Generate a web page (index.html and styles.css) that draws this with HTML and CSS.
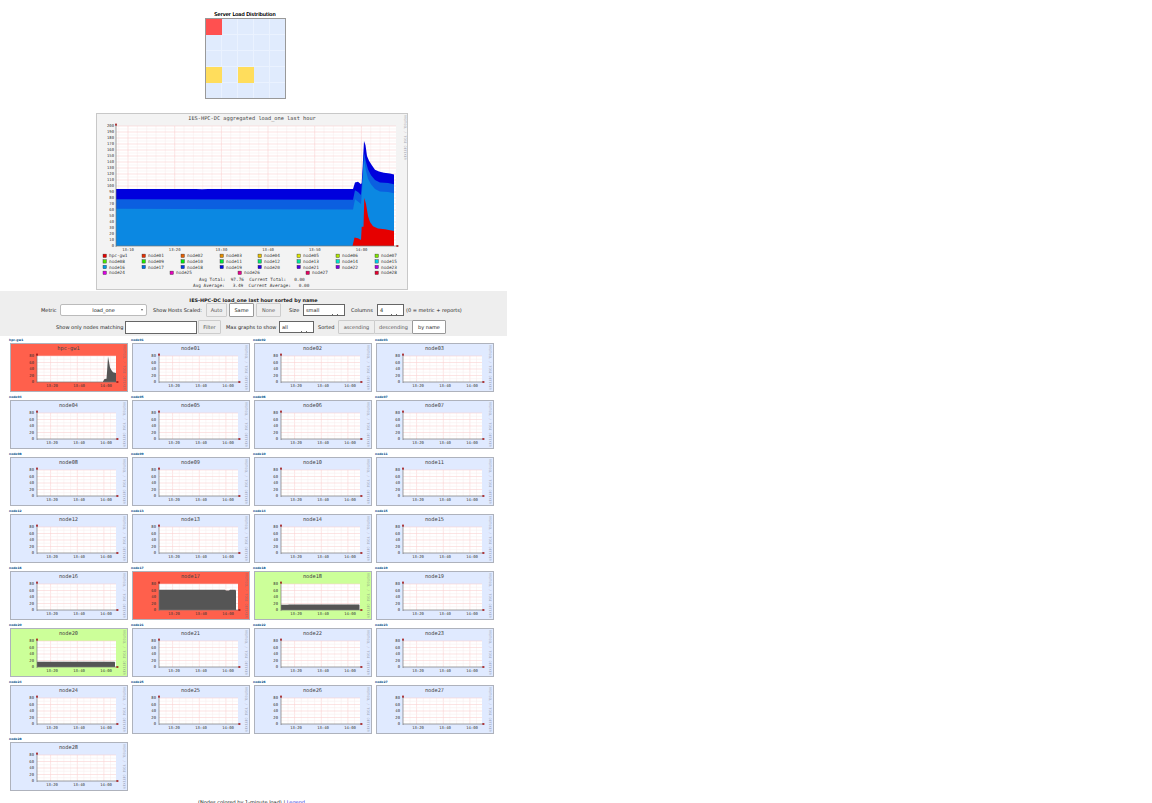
FILE: index.html
```html
<!DOCTYPE html>
<html lang="en">
<head>
    <meta charset="UTF-8">
    <title>IES-HPC-DC Cluster Report</title>
    <meta name="viewport" content="width=device-width, initial-scale=1.0">
    <link rel="stylesheet" href="styles.css">
</head>
<body>
    <div class="page">
        <div class="heat-title">Server Load Distribution</div>
        <div class="heatmap" id="heatmap"></div>

        <div class="aggregate" id="aggregate"></div>

        <form class="controls">
            <div class="controls-title">IES-HPC-DC load_one last hour sorted by name</div>
            <div class="controls-row row-top">
                <span class="lbl w-metric">Metric</span>
                <span class="sel sel-metric">load_one</span>
                <span class="lbl w-scaled">Show Hosts Scaled:</span>
                <button type="button" class="btn w-auto">Auto</button>
                <button type="button" class="btn on w-same">Same</button>
                <button type="button" class="btn w-none">None</button>
                <span class="lbl w-size">Size</span>
                <span class="sel dark w-small">small</span>
                <span class="lbl w-cols">Columns</span>
                <span class="sel dark w-four">4</span>
                <span class="lbl w-note">(0 = metric + reports)</span>
            </div>
            <div class="controls-row row-bottom">
                <span class="lbl w-match">Show only nodes matching</span>
                <input type="text" class="match">
                <button type="button" class="btn w-filter">Filter</button>
                <span class="lbl w-max">Max graphs to show</span>
                <span class="sel dark w-all">all</span>
                <span class="lbl w-sorted">Sorted</span>
                <span class="btn-group">
                    <button type="button" class="btn w-asc">ascending</button>
                    <button type="button" class="btn w-desc">descending</button>
                    <button type="button" class="btn on w-name">by name</button>
                </span>
            </div>
        </form>

        <div class="nodes" id="nodes"></div>

        <div class="foot">(Nodes colored by 1-minute load) | <a href="#">Legend</a></div>
    </div>
    <script src="app.js"></script>
</body>
</html>
```

FILE: styles.css
```css
html, body {
    margin: 0;
    padding: 0;
    background: white;
    overflow: hidden;
}
body {
    height: 803px;
    font-family: "DejaVu Sans", Verdana, sans-serif;
    color: #111;
}
.page {
    width: 507px;
    display: flex;
    flex-direction: column;
}
.heat-title {
    width: 80px;
    margin: 11px 0 0 205px;
    height: 7px;
    line-height: 7px;
    font-size: 5.05px;
    text-align: center;
    white-space: nowrap;
    color: #000;
    text-shadow: 0 0 0.3px #000;
}
.heatmap {
    margin-left: 205px;
    width: 81px;
    height: 81px;
    box-sizing: border-box;
    border: 1px solid #999;
    display: grid;
    grid-template-columns: repeat(5, 16px);
    grid-auto-rows: 16px;
    overflow: hidden;
}
.cell {
    background: #e0ebfd;
    box-shadow: inset -1px -1px 0 #eaf2ff;
}
.cell.hot { background: #ff5050; box-shadow: none; }
.cell.warm { background: #ffdd5c; box-shadow: none; }

.aggregate {
    margin: 14px 0 0 96px;
    width: 312px;
    height: 177px;
}
.aggregate svg, .node svg {
    display: block;
}
.controls {
    margin-top: 1px;
    height: 45px;
    background: #eee;
    font-size: 5px;
    box-sizing: border-box;
    padding-top: 6px;
}
.controls-title {
    text-align: center;
    font-weight: bold;
    font-size: 4.87px;
    height: 6px;
    line-height: 6px;
    color: #222;
}
.controls-row {
    display: flex;
    align-items: center;
    height: 14px;
    white-space: nowrap;
}
.row-top { padding-left: 41px; }
.row-bottom { margin-top: 3px; padding-left: 56px; }
.lbl { color: #222; display: block; }
.w-metric { width: 19px; }
.w-scaled { width: 51px; margin-left: 6px; }
.w-size { width: 14px; margin-left: 8px; }
.w-cols { width: 23px; margin-left: 6px; }
.w-note { margin-left: 2px; }
.w-match { width: 69px; }
.w-max { width: 51px; margin-left: 5px; }
.w-sorted { width: 20px; margin-left: 4px; }

.sel {
    position: relative;
    display: block;
    box-sizing: border-box;
    height: 12px;
    line-height: 10px;
    background: white;
    border: 1px solid #bbb;
    border-radius: 2px;
    text-align: center;
}
.sel::after {
    content: "";
    position: absolute;
    right: 3px;
    top: 4px;
    border: 1.5px solid transparent;
    border-top: 2px solid #666;
}
.sel.dark {
    border-color: #666;
    border-radius: 0;
    text-align: left;
    padding-left: 2px;
    color: #222;
}
.sel.dark::after {
    top: auto;
    bottom: 0;
    right: 6px;
    width: 4px;
    height: 1px;
    border: 0;
    border-left: 1px solid #666;
    border-right: 1px solid #666;
}
.sel-metric { width: 87px; }
.w-small { width: 42px; }
.w-four { width: 27px; margin-left: 3px; }
.w-all { width: 35px; margin-left: 2px; }

.btn {
    display: block;
    box-sizing: border-box;
    height: 14px;
    padding: 0;
    background: #eee;
    border: 1px solid #ccc;
    border-radius: 1px;
    font-family: inherit;
    font-size: 5px;
    color: #555;
    cursor: pointer;
}
.btn.on {
    background: white;
    border-color: #999;
    color: #222;
}
.w-auto { width: 21px; margin-left: 2px; }
.w-same { width: 25px; margin-left: 2px; }
.w-none { width: 25px; margin-left: 2px; }
.w-filter { width: 23px; margin-left: 1px; }
.btn-group { display: flex; }
.w-asc { width: 37px; }
.w-desc { width: 39px; margin-left: -1px; }
.w-name { width: 34px; margin-left: -1px; }
.match {
    width: 72px;
    height: 13px;
    box-sizing: border-box;
    border: 1px solid #666;
    background: white;
    padding: 0;
}

.nodes {
    margin: 2px 0 0 10px;
    display: grid;
    grid-template-columns: repeat(4, 118px);
    grid-auto-rows: 57px;
    column-gap: 4px;
}
.node-name {
    display: block;
    height: 5px;
    line-height: 5px;
    margin-left: -1px;
    font-size: 3px;
    font-weight: bold;
    color: #004c8c;
    text-decoration: none;
}
.node {
    width: 118px;
    height: 49px;
    box-sizing: border-box;
    border: 1px solid #aeb2bc;
    background: #e0eaff;
}
.node.high { background: #ff604c; }
.node.mid { background: #ccff99; }

.foot {
    margin: 5px 0 0 198px;
    font-size: 5px;
    height: 6px;
    line-height: 6px;
    white-space: nowrap;
    color: #111;
}
.foot a { color: #3333dd; text-decoration: none; }

/* svg graph parts */
.g-bg { fill: #f3f3f3; stroke: #c8c8c8; }
.g-plot { fill: white; }
.g-minor { stroke: #f8eeee; stroke-width: 0.6; }
.g-major { stroke: #fad2d2; stroke-width: 0.6; }
.g-axis { stroke: #777; stroke-width: 0.7; }
.g-arrow { fill: #a01010; }
.g-txt {
    font-family: "DejaVu Sans Mono", "Liberation Mono", monospace;
    font-size: 3.9px;
    fill: #333;
    white-space: pre;
}
.g-title { font-size: 5.3px; fill: #444; }
.g-legend { font-size: 4.4px; }
.g-side { font-size: 3.4px; fill: #667; fill-opacity: 0.55; }
.g-sw { stroke: #333; stroke-width: 0.4; }
```

FILE: app.js
```js
// heatmap: 5 x 5 cells, index of the loaded ones
const heat = document.getElementById('heatmap');
for (let i = 0; i < 25; i++) {
    const c = document.createElement('div');
    c.className = 'cell' + (i === 0 ? ' hot' : '') + (i === 15 || i === 17 ? ' warm' : '');
    heat.appendChild(c);
}

function gridLines(x0, x1, y0, y1, xs, ys) {
    let out = '';
    xs.forEach(l => { out += `<line class="${l[1] ? 'g-major' : 'g-minor'}" x1="${l[0]}" x2="${l[0]}" y1="${y0}" y2="${y1}"/>`; });
    ys.forEach(l => { out += `<line class="${l[1] ? 'g-major' : 'g-minor'}" x1="${x0}" x2="${x1}" y1="${l[0]}" y2="${l[0]}"/>`; });
    return out;
}

function arrows(x0, x1, y0, y1) {
    return `<line class="g-axis" x1="${x0}" x2="${x1 + 1}" y1="${y1}" y2="${y1}"/>` +
        `<line class="g-axis" x1="${x0}" x2="${x0}" y1="${y0 - 1}" y2="${y1 + 1}"/>` +
        `<rect class="g-arrow" x="${x0 - 0.8}" y="${y0 - 2.4}" width="1.6" height="2"/>` +
        `<rect class="g-arrow" x="${x1 + 0.4}" y="${y1 - 0.8}" width="2" height="1.6"/>`;
}

// aggregate stacked graph
function buildAggregate() {
    const X0 = 20, X1 = 300, Y0 = 13, Y1 = 133;
    const yv = v => Y1 - v * 0.6;

    const xs = [];
    for (let x = 32 - 9.33, i = -1; x < X1; x += 9.335, i++) {
        xs.push([x.toFixed(1), (i + 5) % 5 === 0]);
    }
    const ys = [];
    for (let v = 10; v <= 200; v += 10) ys.push([yv(v), true]);
    for (let v = 5; v <= 195; v += 10) ys.push([yv(v), false]);

    const top = [[20, 95], [100, 95], [106, 94.6], [112, 95], [353, 95], [355, 106], [358, 107], [361, 103], [361.7, 105], [362.6, 130], [364, 175], [365.5, 168], [367, 150], [369, 142], [372, 134], [375, 127], [379, 124], [384, 122], [390, 121], [394, 119]];
    const mid = [[20, 78], [353, 77], [355, 93], [358, 90], [361, 85], [362.6, 120], [364, 155], [366, 140], [368, 128], [371, 118], [375, 110], [380, 106], [388, 105], [394, 103]];
    const low = [[20, 62], [353, 61], [355, 78], [358, 74], [361, 70], [362.6, 105], [364, 145], [366, 125], [368, 112], [371, 103], [375, 95], [380, 91], [388, 90], [394, 88]];
    const red = [[20, 0], [352.5, 0], [354.5, 14], [358, 13], [361, 10], [361.7, 32], [363.5, 32], [364.3, 80], [366, 70], [368, 50], [370, 40], [373, 33], [378, 29], [385, 28], [394, 25]];

    // points above x 300 are page coordinates, the graph starts at page x 96
    const area = (pts, color) => {
        const p = pts.map(q => (q[0] > 300 ? q[0] - 96 : q[0]) + ',' + yv(q[1]).toFixed(1));
        return `<polygon fill="${color}" points="20,${Y1} ${p.join(' ')} 298,${Y1}"/>`;
    };

    let s = `<rect class="g-bg" x="0.5" y="0.5" width="311" height="176"/>`;
    s += `<rect class="g-plot" x="${X0}" y="${Y0}" width="${X1 - X0}" height="${Y1 - Y0}"/>`;
    s += gridLines(X0, X1, Y0, Y1, xs, ys);
    s += area(top, '#0000dd') + area(mid, '#0b5fe0') + area(low, '#0b88e2') + area(red, '#e60000');
    s += arrows(X0, X1, Y0, Y1);

    s += `<text class="g-txt g-title" x="156" y="7" text-anchor="middle">IES-HPC-DC aggregated load_one last hour</text>`;
    for (let v = 0; v <= 200; v += 10) {
        s += `<text class="g-txt" x="18" y="${yv(v) + 1.4}" text-anchor="end">${v}</text>`;
    }
    ['13:10', '13:20', '13:30', '13:40', '13:50', '14:00'].forEach((t, i) => {
        s += `<text class="g-txt" x="${32 + i * 46.7}" y="138" text-anchor="middle">${t}</text>`;
    });
    s += `<text class="g-txt g-side" transform="translate(307.5 2) rotate(90)">RRDTOOL / TOBI OETIKER</text>`;

    // legend
    const names = ['hpc-gw1'];
    for (let i = 1; i <= 28; i++) names.push('node' + String(i).padStart(2, '0'));
    const col = [7, 46, 85, 124, 162, 201, 240, 279];
    names.forEach((n, i) => {
        let x, y;
        if (i < 24) {
            x = col[i % 8];
            y = 143 + Math.floor(i / 8) * 5.6;
        } else {
            x = [7, 74, 142, 210, 279][i - 24];
            y = 160;
        }
        const c = `hsl(${i * 360 / 29}, 100%, 45%)`;
        s += `<rect class="g-sw" x="${x}" y="${y - 1.9}" width="3.4" height="3.4" fill="${c}"/>`;
        s += `<text class="g-txt g-legend" x="${x + 6}" y="${y + 1.4}">${n}</text>`;
    });
    s += `<text class="g-txt g-legend" x="103" y="167.5">Avg Total:  97.76  Current Total:   0.00</text>`;
    s += `<text class="g-txt g-legend" x="97" y="173.5">Avg Average:   3.49  Current Average:   0.00</text>`;

    document.getElementById('aggregate').innerHTML =
        `<svg width="312" height="177" viewBox="0 0 312 177">${s}</svg>`;
}

// small per node graph
function buildNode(name, klass, data) {
    const X0 = 26, X1 = 105, Y0 = 12, Y1 = 38;
    const yv = v => Y1 - v * 0.325;

    const xs = [];
    for (let x = 33, i = 0; x < X1; x += 6.65, i++) {
        xs.push([x.toFixed(1), i % 4 === 1]);
    }
    const ys = [];
    for (let v = 20; v <= 80; v += 20) ys.push([yv(v), true]);
    for (let v = 10; v <= 70; v += 20) ys.push([yv(v), false]);

    let s = `<rect class="g-plot" x="${X0}" y="${Y0}" width="${X1 - X0}" height="${Y1 - Y0}"/>`;
    s += gridLines(X0, X1, Y0, Y1, xs, ys);
    if (data) {
        const p = data.map(q => q[0] + ',' + yv(q[1]).toFixed(1)).join(' ');
        s += `<polygon fill="#555" points="${data[0][0]},${Y1} ${p} ${data[data.length - 1][0]},${Y1}"/>`;
    }
    s += arrows(X0, X1, Y0, Y1);
    s += `<text class="g-txt g-title" x="57.5" y="6" text-anchor="middle">${name}</text>`;
    [0, 20, 40, 60, 80].forEach(v => {
        s += `<text class="g-txt" x="23" y="${yv(v) + 1.4}" text-anchor="end">${v}</text>`;
    });
    [['13:20', 41], ['13:40', 68], ['14:00', 95]].forEach(t => {
        s += `<text class="g-txt" x="${t[1]}" y="43" text-anchor="middle">${t[0]}</text>`;
    });
    s += `<text class="g-txt g-side" transform="translate(111.5 1) rotate(90)">RRDTOOL / TOBI OETIKER</text>`;

    const cell = document.createElement('div');
    cell.innerHTML = `<a class="node-name" href="#">${name}</a>` +
        `<div class="node ${klass}"><svg width="116" height="47" viewBox="0 0 116 47">${s}</svg></div>`;
    return cell;
}

const loads = {
    'hpc-gw1': ['high', [[92, 2], [93.5, 9], [95.5, 10], [96, 30], [97, 78], [98, 62], [99, 45], [100.5, 36], [102, 30], [105, 28]]],
    'node17': ['high', [[26, 62], [92, 62], [93, 60], [96, 60], [97, 62], [102.5, 62], [103, 58]]],
    'node18': ['mid', [[26, 16], [33, 16], [34, 17], [104, 17], [104.5, 15]]],
    'node20': ['mid', [[26, 16], [103.5, 16], [104, 14]]]
};

buildAggregate();
const nodes = document.getElementById('nodes');
for (let i = 0; i <= 28; i++) {
    const name = i === 0 ? 'hpc-gw1' : 'node' + String(i).padStart(2, '0');
    const info = loads[name] || ['', null];
    nodes.appendChild(buildNode(name, info[0], info[1]));
}
```
